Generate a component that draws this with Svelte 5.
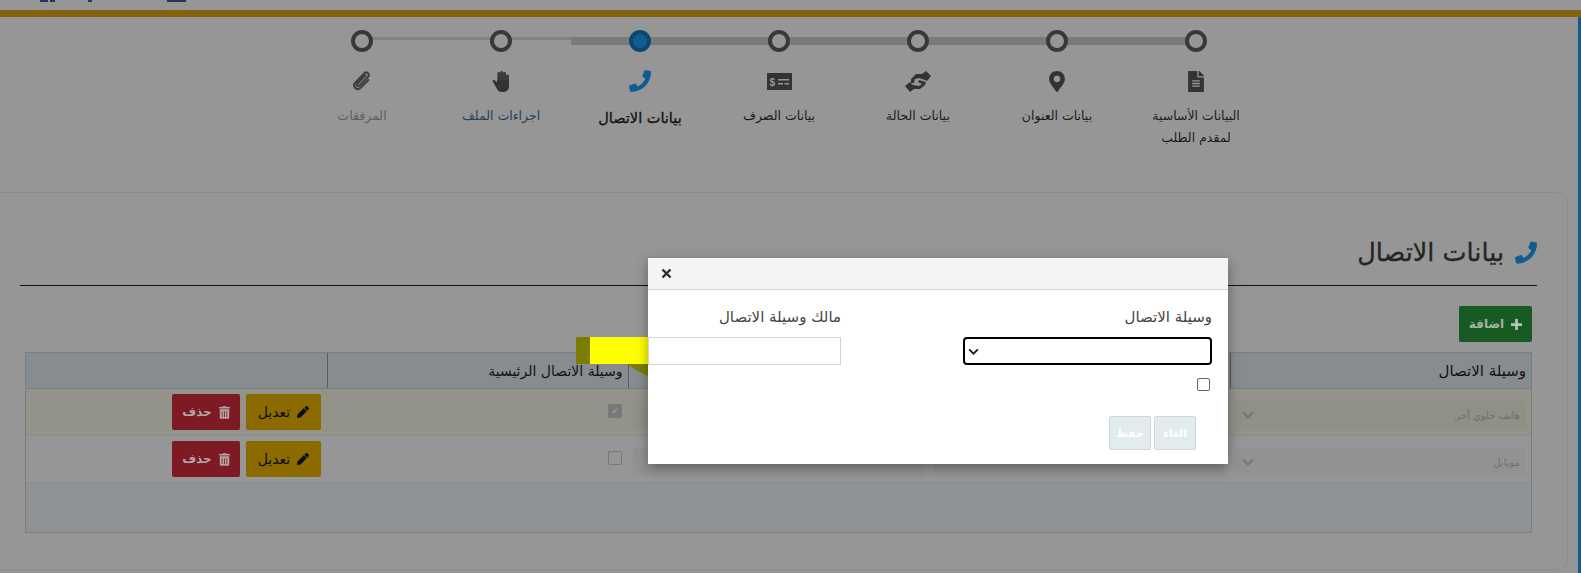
<script>
  const steps = [
    { label: 'البيانات الأساسية لمقدم الطلب', icon: 'file', cls: '' },
    { label: 'بيانات العنوان', icon: 'marker', cls: '' },
    { label: 'بيانات الحالة', icon: 'handshake', cls: '' },
    { label: 'بيانات الصرف', icon: 'money', cls: '' },
    { label: 'بيانات الاتصال', icon: 'phone', cls: 'active' },
    { label: 'اجراءات الملف', icon: 'hand', cls: 'blue' },
    { label: 'المرفقات', icon: 'clip', cls: 'muted' }
  ];

  const rows = [
    { type: 'هاتف خلوي آخر', main: true, tint: true },
    { type: 'موبايل', main: false, tint: false }
  ];

  const phone = 'M493.4 24.6l-104-24c-11.3-2.6-22.9 3.3-27.5 13.9l-48 112c-4.2 9.8-1.4 21.3 6.9 28l60.6 49.6c-36 76.7-98.9 140.5-177.2 177.2l-49.6-60.6c-6.8-8.3-18.2-11.1-28-6.9l-112 48C3.9 366.5-2 378.1.6 389.4l24 104C27.1 504.2 36.7 512 48 512c256.1 0 464-207.5 464-464 0-11.2-7.7-20.9-18.6-23.4z';
  const pencil = 'M497.9 142.1l-46.1 46.1c-4.7 4.7-12.3 4.7-17 0l-111-111c-4.7-4.7-4.7-12.3 0-17l46.1-46.1c18.7-18.7 49.1-18.7 67.9 0l60.1 60.1c18.8 18.7 18.8 49.1 0 67.9zM284.2 99.8L21.6 362.4.4 483.9c-2.9 16.4 11.4 30.6 27.8 27.8l121.5-21.3 262.6-262.6c4.7-4.7 4.7-12.3 0-17l-111-111c-4.8-4.7-12.4-4.7-17.1 0z';
  const trash = 'M32 464a48 48 0 0 0 48 48h288a48 48 0 0 0 48-48V128H32zm272-256a16 16 0 0 1 32 0v224a16 16 0 0 1-32 0zm-96 0a16 16 0 0 1 32 0v224a16 16 0 0 1-32 0zm-96 0a16 16 0 0 1 32 0v224a16 16 0 0 1-32 0zM432 32H312l-9.4-18.7A24 24 0 0 0 281.1 0H166.8a23.72 23.72 0 0 0-21.4 13.3L136 32H16A16 16 0 0 0 0 48v32a16 16 0 0 0 16 16h416a16 16 0 0 0 16-16V48a16 16 0 0 0-16-16z';
</script>

{#snippet stepIcon(name)}
  {#if name === 'file'}
    <svg width="16" height="21" viewBox="0 0 384 512"><path d="M224 136V0H24C10.7 0 0 10.7 0 24v464c0 13.3 10.7 24 24 24h336c13.3 0 24-10.7 24-24V160H248c-13.2 0-24-10.8-24-24zm64 236c0 6.6-5.4 12-12 12H108c-6.6 0-12-5.4-12-12v-8c0-6.6 5.4-12 12-12h168c6.6 0 12 5.4 12 12v8zm0-64c0 6.6-5.4 12-12 12H108c-6.6 0-12-5.4-12-12v-8c0-6.6 5.4-12 12-12h168c6.6 0 12 5.4 12 12v8zm0-72v8c0 6.6-5.4 12-12 12H108c-6.6 0-12-5.4-12-12v-8c0-6.6 5.4-12 12-12h168c6.6 0 12 5.4 12 12zm96-114.1v6.1H256V0h6.1c6.4 0 12.5 2.5 17 7l97.9 98c4.5 4.5 7 10.6 7 16.9z"/></svg>
  {:else if name === 'marker'}
    <svg width="16" height="21" viewBox="0 0 384 512"><path d="M172.268 501.67C26.97 291.031 0 268.413 0 192 0 85.961 85.961 0 192 0s192 85.961 192 192c0 76.413-26.97 99.031-172.268 309.67-9.535 13.774-29.93 13.773-39.464 0zM192 272c44.183 0 80-35.817 80-80s-35.817-80-80-80-80 35.817-80 80 35.817 80 80 80z"/></svg>
  {:else if name === 'handshake'}
    <svg width="26" height="21" viewBox="0 0 26 21"><path d="M26 5l-5-5-4 3h-6L6 8v4h3l1-4 4-1 6 2 2 1z"/><path d="M0 15l5 6 4-3h6l5-4 1-3-7-2-1 2 4 2-3 2-6-1-3-3z"/></svg>
  {:else if name === 'money'}
    <svg width="25" height="17" viewBox="0 0 25 17"><rect width="25" height="17"/><text x="2.500" y="12.500" direction="ltr" font-size="10" font-weight="700" fill="#989898" font-family="Liberation Sans, sans-serif">$</text><path d="M11 6h11v1.500H11zM11 10h5v1.500h-5zM17.500 10H22v1.500h-4.500z" fill="#989898"/></svg>
  {:else if name === 'phone'}
    <svg width="22" height="22" viewBox="0 0 512 512"><path d={phone} fill="#0f5c90"/></svg>
  {:else if name === 'hand'}
    <svg width="18" height="21" viewBox="0 0 18 21"><path d="M6.800 2.500v8M9.700 1.500v8.500M12.600 2.500V10M15.500 5v8" stroke="#3a3a3a" stroke-width="2.900" stroke-linecap="round" fill="none"/><path d="M5 5v6.500L3 9.500C1.500 8 0 9.200.9 10.800L5 18c1 2 2.400 3 4.600 3h2c3 0 5.400-2.400 5.400-5.500V9H5z"/></svg>
  {:else}
    <svg width="20" height="22" viewBox="0 0 19 21"><path d="M12.600 5.200L5 13.200c-1.200 1.300.6 3 1.900 1.800l8.300-8.500c2.200-2.400-1-5.700-3.400-3.400L3.200 12c-3.300 3.500 1.500 8.300 5 5l7.300-7.500" stroke="#3f3f3f" stroke-width="2.100" fill="none" stroke-linecap="round"/></svg>
  {/if}
{/snippet}

<div class="page" dir="rtl">
  <div class="topnav">
    <i class="nub n1"></i><i class="nub n2"></i><i class="nub n3"></i><i class="nub n4"></i>
  </div>
  <div class="goldbar"></div>

  <ol class="stepper">
    {#each steps as step}
      <li class="step {step.cls}">
        <span class="dot"></span>
        <span class="icon">{@render stepIcon(step.icon)}</span>
        <span class="label">{step.label}</span>
      </li>
    {/each}
  </ol>

  <section class="panel">
    <h2 class="title">
      <svg width="22" height="23" viewBox="0 0 512 512"><path d={phone} fill="#0f5c90"/></svg>
      بيانات الاتصال
    </h2>
    <div class="rule"></div>

    <button class="btn add">
      <svg width="11" height="11" viewBox="0 0 12 12"><path d="M4.500 0h3v4.500H12v3H7.500V12h-3V7.500H0v-3h4.500z"/></svg>
      اضافة
    </button>

    <div class="tablewrap">
      <table>
        <thead>
          <tr>
            <th>وسيلة الاتصال</th>
            <th>مالك وسيلة الاتصال</th>
            <th>رقم وسيلة الاتصال</th>
            <th class="mainhead">وسيلة الاتصال الرئيسية</th>
            <th></th>
          </tr>
        </thead>
        <tbody>
          {#each rows as row}
            <tr class:tint={row.tint}>
              <td>
                <div class="fakeselect">
                  <span>{row.type}</span>
                  <svg width="12" height="8" viewBox="0 0 12 8"><path d="M1 1.500l5 5 5-5" stroke="#747474" stroke-width="2" fill="none"/></svg>
                </div>
              </td>
              <td><div class="fakeinput"></div></td>
              <td><div class="fakeinput"></div></td>
              <td><span class="check" class:on={row.main}>{row.main ? '✓' : ''}</span></td>
              <td>
                <div class="actions">
                  <button class="btn edit">
                    <svg width="12" height="12" viewBox="0 0 512 512"><path d={pencil}/></svg>
                    تعديل
                  </button>
                  <button class="btn del">
                    <svg width="11" height="13" viewBox="0 0 448 512"><path d={trash}/></svg>
                    حذف
                  </button>
                </div>
              </td>
            </tr>
          {/each}
        </tbody>
      </table>
    </div>
  </section>

  <svg class="highlight" width="72" height="39" viewBox="0 0 72 39">
    <path d="M0 0h14v27H0zM52 27h20v12l-12-6z" fill="#7c7c00"/>
    <rect x="14" y="0" width="58" height="27" fill="#ffff00"/>
  </svg>

  <div class="modal">
    <div class="modal-head">
      <svg width="11" height="11" viewBox="0 0 11 11"><path d="M1.500 1.500l8 8M9.500 1.500l-8 8" stroke="#2b2b2b" stroke-width="2.400"/></svg>
    </div>
    <div class="modal-body">
      <div class="field">
        <label for="m-type">وسيلة الاتصال</label>
        <div id="m-type" class="select">
          <svg width="11" height="7" viewBox="0 0 12 8"><path d="M1 1.500l5 5 5-5" stroke="#222" stroke-width="2.200" fill="none"/></svg>
        </div>
        <span class="box"></span>
      </div>
      <div class="field owner">
        <label for="m-owner">مالك وسيلة الاتصال</label>
        <div id="m-owner" class="textbox"></div>
      </div>
    </div>
    <div class="modal-foot">
      <button class="ghost">الغاء</button>
      <button class="ghost">حفظ</button>
    </div>
  </div>
</div>

<style>
  :global(body) {
    margin: 0;
    background: #969696;
  }

  .page {
    position: relative;
    height: 573px;
    overflow: hidden;
    background: #969696;
    font-family: "DejaVu Sans", sans-serif;
    color: #1b1b1b;
  }

  /* blue edge of the shell, under the gold bar */
  .page::after {
    content: '';
    position: absolute;
    top: 17px;
    bottom: 0;
    right: 0;
    width: 3px;
    background: #0f5c90;
  }

  .topnav {
    height: 10px;
    position: relative;
  }

  .nub {
    position: absolute;
    top: 0;
    height: 2px;
    background: #243658;
  }
  .n1 { right: 1533px; width: 8px; }
  .n2 { right: 1526px; width: 5px; }
  .n3 { right: 1489px; width: 4px; }
  .n4 { right: 1395px; width: 19px; }

  .goldbar {
    height: 7px;
    background: #846410;
  }

  .stepper {
    list-style: none;
    margin: 13px 0 0;
    padding: 0 23px 0 0;
    height: 162px;
    display: flex;
    justify-content: center;
  }

  .step {
    width: 139px;
    display: flex;
    flex-direction: column;
    align-items: center;
    position: relative;
    font-size: 12.5px;
    line-height: 22px;
    text-align: center;
  }

  .step::before {
    content: '';
    position: absolute;
    top: 7px;
    left: 0;
    width: 100%;
    height: 8px;
    background: #7a7a7a;
  }
  .step:first-child::before { width: 50%; left: 0; }
  .step:last-child::before { width: 50%; left: 50%; }
  .step.blue::before, .step.muted::before {
    height: 3px;
    background: #888082;
  }

  .dot {
    width: 22px;
    height: 22px;
    box-sizing: border-box;
    border: 4px solid #383838;
    border-radius: 50%;
    background: #969696;
    position: relative;
  }
  .active .dot {
    background: #0f5c90;
    border-color: #0d4670;
  }

  .icon {
    height: 22px;
    margin-top: 18px;
    display: flex;
    align-items: center;
    justify-content: center;
    fill: #333;
  }

  .label {
    margin-top: 13px;
    width: 110px;
  }
  .active .label {
    font-size: 14.5px;
    margin-top: 15px;
    width: 130px;
    color: #111;
    -webkit-text-stroke: 0.3px #111;
  }
  .blue .label { color: #23405f; }
  .muted .label { color: #5e5e5e; }

  .panel {
    box-sizing: border-box;
    height: 378px;
    margin-right: 13px;
    padding: 43px 0 0;
    border: 1px solid #8b8e8b;
    border-left: 0;
    border-radius: 0 10px 10px 0;
  }

  .title {
    margin: 0 30px 0 0;
    font-size: 25.5px;
    font-weight: 400;
    line-height: 32px;
    color: #242424;
    -webkit-text-stroke: 0.3px #242424;
    display: flex;
    gap: 11px;
    align-items: center;
  }

  .rule {
    height: 1px;
    background: #111;
    margin: 17px 30px 0 20px;
  }

  .btn {
    font-family: inherit;
    border: 0;
    border-radius: 2px;
    height: 36px;
    font-size: 12px;
    font-weight: 700;
    display: inline-flex;
    align-items: center;
    justify-content: center;
    gap: 7px;
    padding: 0;
  }

  .add {
    margin: 20px 35px 0 0;
    width: 73px;
    background: #175a23;
    color: #a4b4a4;
    fill: #b4c4b4;
    display: flex;
  }

  .tablewrap {
    margin: 10px 35px 0 0;
    width: 1507px;
    height: 181px;
    box-sizing: border-box;
    border: 1px solid #787f83;
    background: #8e9294;
  }

  table {
    width: 100%;
    border-collapse: collapse;
    table-layout: fixed;
  }

  th {
    height: 35px;
    padding: 0 5px;
    text-align: right;
    font-size: 15px;
    font-weight: 400;
    color: #111;
    background: #878c90;
    border-inline-start: 1px solid #565c62;
    border-bottom: 1px solid #787f83;
  }
  th:first-child { border-inline-start: 0; }
  .mainhead { font-size: 14px; }

  td {
    height: 47px;
    padding: 0 5px;
    box-sizing: border-box;
    background: #969696;
    border-bottom: 1px solid #888d8b;
  }
  .tint td { background: #94938a; }
  td:last-child { padding: 0 6px; }

  .fakeselect {
    height: 28px;
    display: flex;
    align-items: center;
    justify-content: space-between;
    padding: 0 6px 0 7px;
    background: #939292;
    font-size: 10px;
    color: #6e6e6e;
    margin: 6px 0 0 0;
  }
  .tint .fakeselect, .tint .fakeinput { background: #919087; }

  .fakeinput {
    height: 28px;
    margin-top: 6px;
    background: #939292;
  }

  .check {
    display: block;
    width: 12px;
    height: 12px;
    margin: -3px 1px 0 0;
    border: 1px solid #787878;
    border-radius: 2px;
    font-size: 9px;
    line-height: 12px;
    text-align: center;
    color: #acacac;
  }
  .check.on { background: #787878; }

  .actions {
    display: flex;
    gap: 6px;
  }

  .edit {
    width: 75px;
    background: #8b6a00;
    color: #0c0c0c;
    font-size: 14px;
    font-weight: 400;
    fill: #0c0c0c;
  }

  .del {
    width: 68px;
    background: #7d1a24;
    color: #b4a4a4;
    fill: #b4a4a4;
  }

  .highlight {
    position: absolute;
    top: 337px;
    left: 576px;
  }

  .modal {
    position: absolute;
    left: 648px;
    top: 258px;
    width: 580px;
    height: 206px;
    background: #fff;
    box-shadow: 0 4px 12px rgba(0, 0, 0, 0.35);
    display: flex;
    flex-direction: column;
    font-size: 15px;
    color: #444;
  }

  .modal-head {
    height: 31px;
    background: #f3f5f5;
    border-bottom: 1px solid #cfd6d9;
    display: flex;
    align-items: center;
    justify-content: flex-end;
    padding: 0 13px;
  }

  .modal-body {
    display: flex;
    gap: 122px;
    padding: 17px 16px 0 0;
  }

  .field {
    width: 249px;
    display: flex;
    flex-direction: column;
  }
  .owner { width: 193px; }

  label {
    line-height: 20px;
    height: 20px;
    margin-bottom: 10px;
  }

  .select {
    height: 28px;
    box-sizing: border-box;
    border: 2px solid #000;
    border-radius: 4px;
    display: flex;
    align-items: center;
    justify-content: flex-end;
    padding: 0 3px;
  }

  .textbox {
    height: 28px;
    box-sizing: border-box;
    border: 1px solid #ced4da;
  }

  .box {
    width: 13px;
    height: 13px;
    box-sizing: border-box;
    border: 1px solid #666;
    border-radius: 2px;
    margin: 13px 2px 0 0;
  }

  .modal-foot {
    display: flex;
    gap: 3px;
    padding: 25px 32px 0 0;
  }

  .ghost {
    width: 42px;
    height: 34px;
    border: 1px solid #cdd8da;
    border-radius: 2px;
    background: #e3eced;
    color: #fff;
    font-family: inherit;
    font-size: 11px;
    font-weight: 700;
    padding: 0;
  }
</style>
